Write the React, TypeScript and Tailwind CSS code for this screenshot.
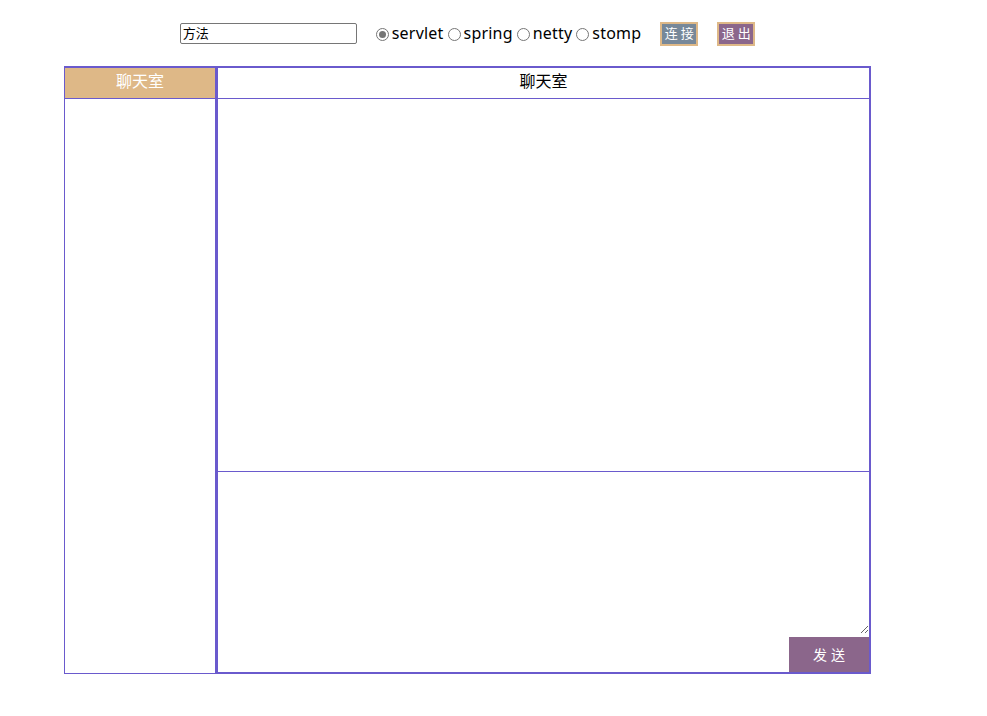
import React from "react";

const font = { fontFamily: '"Noto Sans", "Noto Sans CJK SC", sans-serif' };

function Radio({ label, checked }: { label: string; checked?: boolean }) {
  return (
    <label className="flex items-center text-[16px] text-black leading-none tracking-[0.2px]">
      <span className="w-[13px] h-[13px] rounded-full border border-[#767676] bg-white flex items-center justify-center ml-[4px] mr-[3px] mt-[1px]">
        {checked && <span className="w-[7px] h-[7px] rounded-full bg-[#767676]" />}
      </span>
      <span className="-mt-[1px]">{label}</span>
    </label>
  );
}

export default function App() {
  return (
    <div className="w-[987px] h-[716px] bg-white" style={font}>
      <div className="ml-[64px] w-[807px]">
        <div className="flex items-center justify-center h-[66px] pt-[1px]">
          <div className="w-[177px] h-[21px] border border-[#767676] rounded-[2px] flex items-center px-[2px] text-[13px] text-black leading-none">
            方法
          </div>
          <div className="flex items-center ml-[15px]">
            <Radio label="servlet" checked />
            <Radio label="spring" />
            <Radio label="netty" />
            <Radio label="stomp" />
          </div>
          <button className="ml-[19px] w-[38px] h-[24px] bg-[#778899] border-2 border-[#deb887] text-white text-[13px] tracking-[3px] pl-[3px] p-0 whitespace-nowrap leading-none flex items-center justify-center">
            连接
          </button>
          <button className="ml-[19px] w-[38px] h-[24px] bg-[#8b668b] border-2 border-[#deb887] text-white text-[13px] tracking-[3px] pl-[3px] p-0 whitespace-nowrap leading-none flex items-center justify-center">
            退出
          </button>
        </div>
        <div className="flex h-[608px]">
          <div className="w-[152px] border border-t-2 border-[#6a5acd] flex flex-col">
            <div className="h-[31px] bg-[#deb887] border-b border-[#6a5acd] text-white text-[16px] flex items-center justify-center pb-[4px]">
              聊天室
            </div>
          </div>
          <div className="flex-1 border-2 border-l-2 border-[#6a5acd] flex flex-col">
            <div className="h-[31px] border-b border-[#6a5acd] text-black text-[16px] flex items-center justify-center pb-[5px]">
              聊天室
            </div>
            <div className="h-[372px]" />
            <textarea
              className="h-[163px] w-full border-t border-[#6a5acd] outline-none resize-y block"
              defaultValue=""
            />
            <div className="flex justify-end mt-[3px]">
              <button className="w-[80px] h-[35px] bg-[#8b668b] text-white text-[14px] tracking-[4px] flex items-center justify-center pl-[4px]">
                发送
              </button>
            </div>
          </div>
        </div>
      </div>
    </div>
  );
}
